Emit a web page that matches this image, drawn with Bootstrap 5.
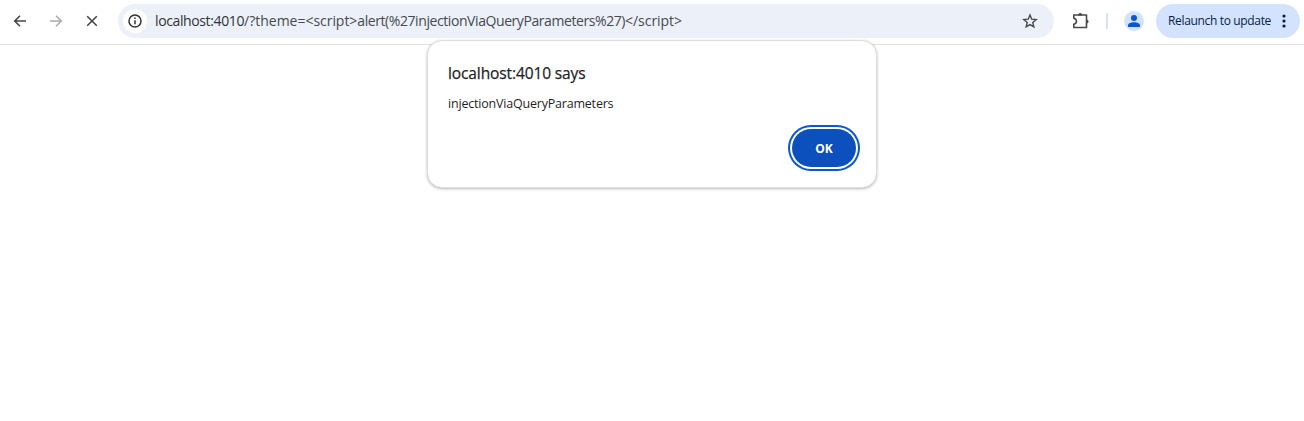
<!DOCTYPE html>
<html lang="en">
<head>
<meta charset="utf-8">
<meta name="viewport" content="width=device-width, initial-scale=1">
<title>localhost:4010</title>
<link href="https://cdn.jsdelivr.net/npm/bootstrap@5.3.0/dist/css/bootstrap.min.css" rel="stylesheet">
<style>
body{font-family:"Open Sans","Noto Sans",sans-serif;color:#1f1f1f;background:#fff;overflow:hidden;height:421px}
.toolbar{height:45px;padding:4px 4px 6px 12px;border-bottom:1px solid #dfe0e1}
.tool{width:16px;height:16px;flex:none;display:block}
.gap-nav{gap:20px;width:106px}
.omnibox{height:34px;width:936px;border-radius:17px;background:#ebf0f9;padding:0 16px 0 5px}
.site-info{width:24px;height:24px;border-radius:50%;background:#fff}
.address{font-size:14px;line-height:20px;margin-left:8px;color:#474a4d;white-space:pre}
.address .host{color:#303236;letter-spacing:-.38px}
.address .query{letter-spacing:0}
.address .tag{letter-spacing:-.05px}
.address .call{letter-spacing:-.42px}
.divider{width:2px;height:16px;background:#d3e3fd;border-radius:1px}
.avatar{width:20px;height:20px;display:block}
.relaunch{width:144px;height:34px;border-radius:17px;background:#d3e3fd;color:#041e49;font-size:12px;letter-spacing:-.34px;padding:0 8px 0 12px;border:0;white-space:nowrap}
.dialog-box{left:427px;top:40px;width:450px;height:148px;border:1px solid #dcdddd;border-radius:15px;background:#fff;box-shadow:0 1px 3px rgba(0,0,0,.28);padding:21px 16px 16px 20px}
.dialog-box h1{font-size:15.5px;line-height:22px;font-weight:500;letter-spacing:-.11px;-webkit-text-stroke:.25px #1f1f1f}
.dialog-box p{font-size:12.5px;line-height:18px;margin-top:11px;letter-spacing:-.2px}
.ok-btn{width:64px;height:38px;border-radius:19px;background:#0b50bd;color:#fff;font-size:12px;font-weight:700;border:0;padding:2px 0 0;margin:16px 4px 0 0;box-shadow:0 0 0 2px #fff,0 0 0 4px #0b57d0}
</style>
</head>
<body>
<header class="toolbar d-flex align-items-center">
  <nav class="gap-nav d-flex align-items-center">
    <svg class="tool" viewBox="0 0 16 16" fill="none" stroke="#474747" stroke-width="1.6"><path d="M14 8H3M8 2.7 2.7 8 8 13.3"/></svg>
    <svg class="tool" viewBox="0 0 16 16" fill="none" stroke="#acacac" stroke-width="1.6"><path d="M2 8h11M8 2.7 13.3 8 8 13.3"/></svg>
    <svg class="tool" viewBox="0 0 16 16" fill="none" stroke="#474747" stroke-width="1.6"><path d="m3.2 3.2 9.6 9.6m0-9.6-9.6 9.6"/></svg>
  </nav>
  <div class="omnibox d-flex align-items-center">
    <span class="site-info d-flex align-items-center justify-content-center"><svg class="tool" viewBox="0 0 16 16" fill="none" stroke="#333" stroke-width="1.5"><circle cx="8" cy="8" r="6"/><path d="M8 7.2v4M8 4.6v1.5"/></svg></span>
    <div class="address"><span class="host">localhost:4010</span><span class="query">/?theme=</span><span class="tag">&lt;script&gt;</span><span class="call">alert(%27injectionViaQueryParameters%27)</span><span class="tag">&lt;/script&gt;</span></div>
    <svg class="tool ms-auto" viewBox="0 0 16 16" fill="none" stroke="#474747" stroke-width="1.4"><path d="m8 2.1 1.75 4.1 4.45.4-3.4 2.95 1.05 4.35L8 11.6l-3.85 2.3L5.2 9.55 1.8 6.6l4.45-.4Z"/></svg>
  </div>
  <svg width="20" height="20" viewBox="0 0 20 20" style="margin-left:17px" fill="none" stroke="#474747" stroke-width="1.6" stroke-linejoin="round"><path d="M2.8 4h12.700v12.500h-12.700v-3.200c3.500-.8 3.500-5.200 0-6Z"/><path d="M7.700 4a1.600 1.600 0 0 1 3.200 0ZM15.500 8.900a1.600 1.600 0 0 1 0 3.200Z" fill="#474747" stroke-width="1"/></svg>
  <span class="divider" style="margin-left:15px"></span>
  <svg class="avatar" viewBox="0 0 20 20" style="margin-left:16px"><circle cx="10" cy="10" r="10" fill="#d3e3fd"/><g fill="#0b57d0"><circle cx="10" cy="7" r="3"/><path d="M4 16v-1.5c0-2 3-3.2 6-3.2s6 1.200 6 3.200V16Z"/></g></svg>
  <button class="relaunch d-flex align-items-center justify-content-between ms-auto"><span>Relaunch to update</span><svg class="tool" viewBox="0 0 16 16" fill="#041e49"><circle cx="8" cy="3" r="1.600"/><circle cx="8" cy="8" r="1.600"/><circle cx="8" cy="13" r="1.600"/></svg></button>
</header>
<section class="dialog-box position-absolute d-flex flex-column" role="dialog">
  <h1 class="mb-0">localhost:4010 says</h1>
  <p class="mb-0">injectionViaQueryParameters</p>
  <button class="ok-btn align-self-end">OK</button>
</section>
<script src="https://cdn.jsdelivr.net/npm/bootstrap@5.3.0/dist/js/bootstrap.bundle.min.js"></script>
</body>
</html>
